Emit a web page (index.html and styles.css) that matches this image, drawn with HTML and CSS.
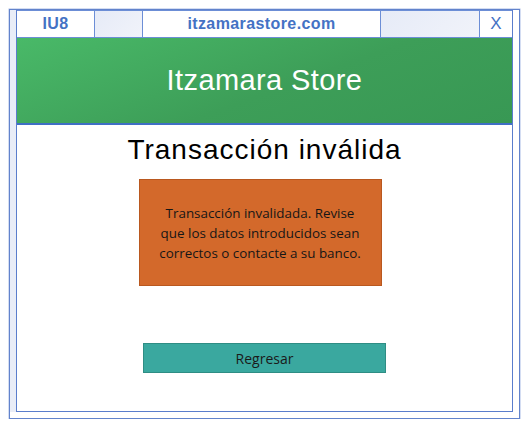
FILE: index.html
```html
<!DOCTYPE html>
<html lang="es">
<head>
<meta charset="utf-8">
<link rel="stylesheet" href="styles.css">
</head>
<body>
<div class="window">
  <div class="gutter"></div>
  <div class="inner">
    <div class="titlebar">
      <div class="cell cell-id">IU8</div>
      <div class="cell cell-blank cell-b1"></div>
      <div class="cell cell-url">itzamarastore.com</div>
      <div class="cell cell-blank cell-b2"></div>
      <div class="cell cell-close">X</div>
    </div>
    <div class="header">Itzamara Store</div>
    <div class="content">
      <h1 class="heading">Transacción inválida</h1>
      <div class="alert">Transacción invalidada. Revise que los datos introducidos sean correctos o contacte a su banco.</div>
      <button class="btn">Regresar</button>
    </div>
  </div>
</div>
</body>
</html>
```

FILE: styles.css
```css
html, body {
  margin: 0;
  padding: 0;
  background: #ffffff;
}
.window {
  margin: 9px 0 0 9px;
  width: 503px;
  height: 402px;
  border: 1px solid #6283cc;
  box-shadow: 0 0 0 0.5px #a9bce6;
  display: flex;
  padding-right: 6px;
  padding-bottom: 6px;
  box-sizing: content-box;
  background: #ffffff;
}
.gutter {
  width: 6px;
  background: #e9edf7;
}
.inner {
  flex: 1;
  border-left: 1px solid #5a7dcc;
  border-right: 1px solid #5a7dcc;
  border-bottom: 1px solid #5a7dcc;
  display: flex;
  flex-direction: column;
  font-family: "Liberation Sans", Arial, sans-serif;
}
.titlebar {
  display: flex;
  height: 28px;
}
.cell {
  box-sizing: border-box;
  border: 1px solid #6c8ed6;
  border-left: none;
  display: flex;
  align-items: center;
  justify-content: center;
  color: #4472c4;
  font-weight: bold;
  font-size: 16px;
  letter-spacing: 0.4px;
  background: #ffffff;
}
.cell-id { width: 78px; }
.cell-b1 { width: 48px; }
.cell-url { width: 238px; }
.cell-b2 { width: 99px; }
.cell-close { flex: 1; border-right: none; font-weight: normal; font-size: 17px; letter-spacing: 0; }
.cell-blank {
  background: linear-gradient(135deg, #e6ebf7, #f1f3fa);
}
.header {
  height: 85px;
  border-bottom: 2px solid #3f6fc4;
  background: linear-gradient(160deg, #49b968 0%, #3d9e58 55%, #389854 100%);
  color: #ffffff;
  font-size: 29px;
  letter-spacing: 0.4px;
  display: flex;
  align-items: center;
  justify-content: center;
}
.content {
  flex: 1;
  display: flex;
  flex-direction: column;
  align-items: center;
}
.heading {
  margin: 8px 0 0 0;
  font-weight: normal;
  font-size: 28px;
  letter-spacing: 1px;
  line-height: 34px;
  color: #000000;
}
.alert {
  margin-top: 12px;
  margin-right: 9px;
  width: 243px;
  height: 107px;
  box-sizing: border-box;
  border: 1px solid #b9581f;
  background: #d3692b;
  color: #161616;
  font-family: "Open Sans", "Noto Sans", sans-serif;
  font-size: 13.4px;
  line-height: 20px;
  text-align: center;
  display: flex;
  align-items: center;
  justify-content: center;
  padding: 0 15px;
}
.btn {
  margin-top: 57px;
  width: 243px;
  height: 30px;
  border: 1px solid #2f8d84;
  background: #3aa89f;
  color: #1a1a1a;
  font-family: "Open Sans", "Noto Sans", sans-serif;
  font-size: 14px;
  padding: 0;
}
```
